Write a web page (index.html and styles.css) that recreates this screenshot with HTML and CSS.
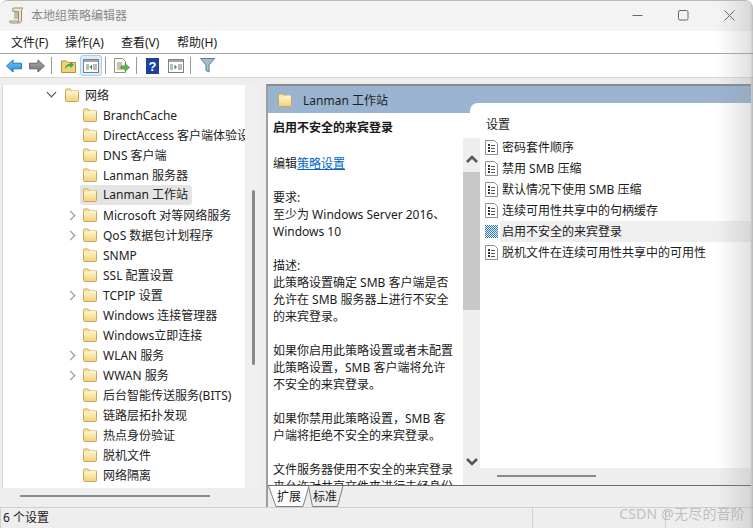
FILE: index.html
```html
<!DOCTYPE html>
<html lang="zh-CN">
<head>
<meta charset="utf-8">
<title>本地组策略编辑器</title>
<link rel="stylesheet" href="styles.css">
</head>
<body>
<svg class="defs" width="0" height="0">
  <defs>
    <linearGradient id="fg" x1="0" y1="0" x2="0" y2="1"><stop offset="0" stop-color="#fdf3c4"/><stop offset="1" stop-color="#f2d27e"/></linearGradient>
    <linearGradient id="bk" x1="0" y1="0" x2="0" y2="1"><stop offset="0" stop-color="#6cc4f5"/><stop offset="1" stop-color="#2a8fdc"/></linearGradient>
    <linearGradient id="fw" x1="0" y1="0" x2="0" y2="1"><stop offset="0" stop-color="#a8a8a8"/><stop offset="1" stop-color="#767676"/></linearGradient>
    <pattern id="dith" width="2" height="2" patternUnits="userSpaceOnUse"><rect width="2" height="2" fill="#eaf3fb"/><rect width="1" height="1" fill="#2f74b5"/><rect x="1" y="1" width="1" height="1" fill="#2f74b5"/></pattern>
    <symbol id="folder" viewBox="0 0 14 14">
      <path d="M.5 3.500V2a1 1 0 0 1 1-1h3.500l1.500 1.500h6a1 1 0 0 1 1 1v9a1 1 0 0 1-1 1h-11a1 1 0 0 1-1-1z" fill="#f8e6a8" stroke="#c9a75a"/>
      <rect x="1" y="4" width="12" height="9" fill="url(#fg)"/>
      <path d="M7 2.500h5.500v1H7z" fill="#fff"/>
    </symbol>
    <symbol id="doc" viewBox="0 0 13 15">
      <path d="M.5.500h9l3 3v11H.5z" fill="#fff" stroke="#8f8f8f"/>
      <path d="M3 4h2v2H3zM3 7h2v2H3zM3 10h2v2H3z" fill="#333"/>
      <path d="M6 5h4v1H6zM6 8h4v1H6zM6 11h4v1H6z" fill="#555"/>
    </symbol>
  </defs>
</svg>
<div class="window">
  <header class="titlebar">
    <svg class="app-icon" width="16" height="17" viewBox="0 0 16 17"><path d="M4 1h10c-1 1-1.500 2-1.500 3v9c0 2-1 3-2.500 3H2c-1 0-1.500-1-1.500-2h8c0 1 .5 1 1 1V5L3.500 4z" fill="#efe6c8" stroke="#9c8f6c"/><path d="M5 5h5M5 7h5M5 9h5M5 11h5" stroke="#8d8468"/></svg>
    <span class="title">本地组策略编辑器</span>
    <div class="controls">
      <svg width="11" height="11" viewBox="0 0 11 11"><path d="M.5 5.500h10" stroke="#666"/></svg>
      <svg width="11" height="11" viewBox="0 0 11 11"><rect x=".5" y=".5" width="9.500" height="9.500" rx="1.500" fill="none" stroke="#666"/></svg>
      <svg width="11" height="11" viewBox="0 0 11 11"><path d="M.5.500l10 10M10.500.500l-10 10" stroke="#666"/></svg>
    </div>
  </header>
  <nav class="menubar">
    <span>文件(F)</span><span>操作(A)</span><span>查看(V)</span><span>帮助(H)</span>
  </nav>
  <div class="toolbar">
    <svg class="tool t-back" width="16" height="14" viewBox="0 0 17 15"><path d="M.5 7.500L7.500 1v3.500h9v6h-9V14z" fill="url(#bk)" stroke="#1c6fb5"/></svg>
    <svg class="tool t-fwd" width="16" height="14" viewBox="0 0 17 15"><path d="M16.500 7.500L9.500 1v3.500h-9v6h9V14z" fill="url(#fw)" stroke="#5f5f5f"/></svg>
    <i class="sep"></i>
    <svg class="tool t-up" width="15" height="15" viewBox="0 0 15 15"><path d="M.5 3h5l1.500 1.500h7.500v10H.5z" fill="#f0d27a" stroke="#b08f3e"/><path d="M4 11c0-4 3-5 5-5V3.500L13 7l-4 3V8c-2 0-3.500 1-5 3z" fill="#45a845"/></svg>
    <span class="tool-sel">
      <svg width="16" height="14" viewBox="0 0 16 14"><rect x=".5" y=".5" width="15" height="13" fill="#fff" stroke="#808080"/><rect x="1" y="1" width="14" height="2" fill="#a5a5a5"/><rect x="3" y="5" width="3" height="6" fill="#bbb"/><rect x="10" y="5" width="4" height="6" fill="#bbb"/><path d="M9 5.500v5L6.500 8z" fill="#2f8f3a"/></svg>
    </span>
    <i class="sep"></i>
    <svg class="tool t-exp" width="16" height="15" viewBox="0 0 16 15"><path d="M.5.500h8l3 3v11h-11z" fill="#fffbe8" stroke="#8f8f8f"/><path d="M3 5h5M3 7h5M3 9h4M3 11h4" stroke="#888"/><path d="M7 8h4V5.500L15.500 9.500 11 13.500V11H7z" fill="#58b84a" stroke="#2f8a2f" stroke-width=".6"/></svg>
    <i class="sep"></i>
    <svg class="tool t-help" width="13" height="16" viewBox="0 0 13 16"><rect width="13" height="16" fill="#1f3f9c"/><text x="6.500" y="13" class="help-q">?</text></svg>
    <svg class="tool t-pane" width="16" height="14" viewBox="0 0 16 14"><rect x=".5" y=".5" width="15" height="13" fill="#fff" stroke="#808080"/><rect x="1" y="1" width="14" height="2" fill="#a5a5a5"/><rect x="2" y="5" width="3" height="6" fill="#bbb"/><rect x="10" y="5" width="4" height="6" fill="#bbb"/><path d="M6.500 5.500v5L9 8z" fill="#2f8f3a"/></svg>
    <i class="sep"></i>
    <svg class="tool t-filter" width="15" height="15" viewBox="0 0 15 15"><path d="M.5.500h14L9 7v7l-3-1.500V7z" fill="#9fc0d2" stroke="#5c7c90"/></svg>
  </div>
  <main class="main">
    <aside class="tree-pane">
      <div class="tree-top">
        <ul class="tree">
          <li class="node root"><span class="chev down"></span><svg class="fi"><use href="#folder"/></svg><span>网络</span></li>
          <li class="node"><span class="chev"></span><svg class="fi"><use href="#folder"/></svg><span>BranchCache</span></li>
          <li class="node"><span class="chev"></span><svg class="fi"><use href="#folder"/></svg><span>DirectAccess 客户端体验设置</span></li>
          <li class="node"><span class="chev"></span><svg class="fi"><use href="#folder"/></svg><span>DNS 客户端</span></li>
          <li class="node"><span class="chev"></span><svg class="fi"><use href="#folder"/></svg><span>Lanman 服务器</span></li>
          <li class="node"><span class="chev"></span><svg class="fi"><use href="#folder"/></svg><span class="selected">Lanman 工作站</span></li>
          <li class="node"><span class="chev right"></span><svg class="fi"><use href="#folder"/></svg><span>Microsoft 对等网络服务</span></li>
          <li class="node"><span class="chev right"></span><svg class="fi"><use href="#folder"/></svg><span>QoS 数据包计划程序</span></li>
          <li class="node"><span class="chev"></span><svg class="fi"><use href="#folder"/></svg><span>SNMP</span></li>
          <li class="node"><span class="chev"></span><svg class="fi"><use href="#folder"/></svg><span>SSL 配置设置</span></li>
          <li class="node"><span class="chev right"></span><svg class="fi"><use href="#folder"/></svg><span>TCPIP 设置</span></li>
          <li class="node"><span class="chev"></span><svg class="fi"><use href="#folder"/></svg><span>Windows 连接管理器</span></li>
          <li class="node"><span class="chev"></span><svg class="fi"><use href="#folder"/></svg><span>Windows立即连接</span></li>
          <li class="node"><span class="chev right"></span><svg class="fi"><use href="#folder"/></svg><span>WLAN 服务</span></li>
          <li class="node"><span class="chev right"></span><svg class="fi"><use href="#folder"/></svg><span>WWAN 服务</span></li>
          <li class="node"><span class="chev"></span><svg class="fi"><use href="#folder"/></svg><span>后台智能传送服务(BITS)</span></li>
          <li class="node"><span class="chev"></span><svg class="fi"><use href="#folder"/></svg><span>链路层拓扑发现</span></li>
          <li class="node"><span class="chev"></span><svg class="fi"><use href="#folder"/></svg><span>热点身份验证</span></li>
          <li class="node"><span class="chev"></span><svg class="fi"><use href="#folder"/></svg><span>脱机文件</span></li>
          <li class="node"><span class="chev"></span><svg class="fi"><use href="#folder"/></svg><span>网络隔离</span></li>
        </ul>
        <div class="vscroll"><i class="vthumb"></i></div>
      </div>
      <div class="hscroll"><i class="hthumb"></i></div>
    </aside>
    <section class="detail">
      <div class="detail-head"><svg class="fi head-fi"><use href="#folder"/></svg><span>Lanman 工作站</span></div>
      <div class="detail-body">
        <article class="desc">
          <p class="desc-title">启用不安全的来宾登录</p>
          <p>编辑<a href="#">策略设置</a></p>
          <p>要求:<br>至少为 Windows Server 2016、<br>Windows 10</p>
          <p>描述:<br>此策略设置确定 SMB 客户端是否<br>允许在 SMB 服务器上进行不安全<br>的来宾登录。</p>
          <p>如果你启用此策略设置或者未配置<br>此策略设置，SMB 客户端将允许<br>不安全的来宾登录。</p>
          <p>如果你禁用此策略设置，SMB 客<br>户端将拒绝不安全的来宾登录。</p>
          <p>文件服务器使用不安全的来宾登录<br>来允许对共享文件夹进行未经身份</p>
        </article>
        <div class="list-col">
          <div class="list-scroll">
            <div class="sb-up"><svg width="12" height="8" viewBox="0 0 12 8"><path d="M1 7l5-5 5 5" fill="none" stroke="#555" stroke-width="2.500"/></svg></div>
            <div class="sb-thumb"></div>
            <div class="sb-down"><svg width="12" height="8" viewBox="0 0 12 8"><path d="M1 1l5 5 5-5" fill="none" stroke="#555" stroke-width="2.500"/></svg></div>
          </div>
          <div class="list-wrap">
            <div class="list">
              <div class="list-head">设置</div>
              <ul class="items">
                <li><svg class="di"><use href="#doc"/></svg><span>密码套件顺序</span></li>
                <li><svg class="di"><use href="#doc"/></svg><span>禁用 SMB 压缩</span></li>
                <li><svg class="di"><use href="#doc"/></svg><span>默认情况下使用 SMB 压缩</span></li>
                <li><svg class="di"><use href="#doc"/></svg><span>连续可用性共享中的句柄缓存</span></li>
                <li class="active"><svg class="di" viewBox="0 0 13 13"><rect width="13" height="13" fill="url(#dith)"/></svg><span>启用不安全的来宾登录</span></li>
                <li><svg class="di"><use href="#doc"/></svg><span>脱机文件在连续可用性共享中的可用性</span></li>
              </ul>
            </div>
            <div class="list-hscroll"><i></i></div>
          </div>
        </div>
      </div>
      <div class="tabs">
        <span class="tab tab-a"><svg class="tab-shape" width="42" height="21" viewBox="0 0 42 21"><path d="M.5 0L8 20.500H35L41 0" fill="#fff" stroke="#808080"/></svg><b>扩展</b></span>
        <span class="tab tab-b"><svg class="tab-shape" width="36" height="21" viewBox="0 0 36 21"><path d="M.5 0L4.500 20.500H29.500L35 0" fill="#eee" stroke="#808080"/></svg><b>标准</b></span>
      </div>
    </section>
  </main>
  <footer class="statusbar">
    <span class="st-main">6 个设置</span><span class="st-mid"></span><span class="st-end"></span>
  </footer>
  <div class="edge"></div>
  <div class="mark">CSDN @无尽的音阶</div>
</div>
</body>
</html>
```
FILE: styles.css
```css
* { box-sizing: border-box; }
html, body { margin: 0; padding: 0; background: #fff; }
body { width: 753px; height: 528px; overflow: hidden; font: 12px/17px "Noto Sans", "Noto Sans CJK SC", sans-serif; color: #1a1a1a; }
ul { list-style: none; margin: 0; padding: 0; }
p { margin: 0; }
.defs { position: absolute; }
.window { position: relative; width: 753px; height: 528px; display: flex; flex-direction: column; background: #eeeeee; border-radius: 8px 8px 0 0; border-top: 1px solid #b8b8b8; overflow: hidden; }

.titlebar { height: 30px; flex: none; display: flex; align-items: center; padding: 0 18px 2px 9px; background: #f3f3f3; }
.app-icon { margin-right: 6px; }
.title { color: #8a8a8a; font-size: 12px; }
.controls { margin-left: auto; display: flex; gap: 35px; }
.controls svg { display: block; }

.menubar { height: 23px; flex: none; display: grid; grid-template-columns: 54px 56px 56px auto; align-items: center; padding-left: 11px; background: #fff; border-bottom: 1px solid #a8a8a8; }
.toolbar { height: 24px; flex: none; display: flex; align-items: center; padding-left: 6px; background: #fff; border-bottom: 1px solid #d8d8d8; }
.tool { flex: none; display: block; }
.sep { flex: none; width: 1px; height: 17px; background: #9a9a9a; }
.t-fwd { margin-left: 7px; }
.t-fwd + .sep { margin-left: 6px; margin-right: 9px; }
.t-up { margin-right: 4px; }
.tool-sel { flex: none; width: 22px; height: 21px; display: flex; align-items: center; justify-content: center; background: #dcecfb; border: 1px solid #a5d0f4; border-radius: 3px; margin-right: 3px; }
.tool-sel + .sep { margin-right: 8px; }
.t-exp { margin-right: 6px; }
.t-exp + .sep { margin-right: 9px; }
.t-help { margin-right: 9px; }
.help-q { font: bold 13px "Liberation Sans", sans-serif; fill: #fff; text-anchor: middle; }
.t-pane { margin-right: 6px; }
.t-pane + .sep { margin-right: 9px; }

.main { flex: 1; min-height: 0; display: flex; padding: 6px 2px 0 2px; }
.tree-pane { width: 256px; flex: none; display: flex; flex-direction: column; padding-top: 1px; }
.tree-top { height: 403px; flex: none; display: flex; border-left: 1px solid #d8d8d8; }
.tree { width: 242px; flex: none; background: #fff; overflow: hidden; }
.node { height: 20px; display: flex; align-items: center; padding-left: 62px; white-space: nowrap; position: relative; color: #222; }
.node:not(.root) { padding-left: 80px; }
.fi { width: 14px; height: 14px; flex: none; margin-right: 6px; }
.selected { background: #e4e4e4; border-radius: 3px; height: 20px; line-height: 20px; padding: 0 4px 0 23px; margin-left: -23px; }
.node .fi { position: relative; z-index: 1; }
.chev { position: absolute; left: 44px; top: 6px; width: 8px; height: 8px; }
.node:not(.root) .chev { left: 64px; }
.chev.down::before, .chev.right::before { content: ""; position: absolute; width: 6px; height: 6px; border-right: 1.5px solid #444; border-bottom: 1.5px solid #444; }
.chev.down::before { transform: rotate(45deg); left: 1px; top: -2px; }
.chev.right::before { transform: rotate(-45deg); border-color: #8d8d8d; left: 0; top: 1px; }
.vscroll { flex: 1; background: #f0f0f0; position: relative; }
.vthumb { position: absolute; left: 7px; top: 105px; width: 3px; height: 175px; background: #8a8a8a; border-radius: 2px; }
.hscroll { height: 17px; flex: none; position: relative; }
.hthumb { position: absolute; left: 18px; top: 7px; width: 190px; height: 2px; background: #8a8a8a; }

.detail { flex: 1; min-width: 0; margin-left: 8px; display: flex; flex-direction: column; border-left: 2px solid #9e9e9e; border-top: 2px solid #8a8a8a; min-height: 0; }
.detail-head { height: 27px; flex: none; display: flex; align-items: center; gap: 11px; padding: 1px 0 0 10px; background: #9ab3d1; color: #1f1f1f; }
.head-fi { margin: 0; }
.detail-body { height: 373px; flex: none; display: flex; background: #fff; border-bottom: 1px solid #6a6a6a; }
.desc { width: 195px; flex: none; padding: 6px 0 0 5px; overflow: hidden; color: #1a1a1a; }
.desc p { margin-bottom: 17px; white-space: nowrap; }
.desc .desc-title { font-weight: 700; margin-bottom: 19px; }
.desc a { color: #0066cc; text-decoration: underline; }
.list-col { flex: 1; min-width: 0; display: flex; }
.list-scroll { width: 17px; flex: none; margin-top: 25px; background: #eeeeee; display: flex; flex-direction: column; align-items: center; position: relative; z-index: 1; }
.sb-up { height: 34px; flex: none; padding-top: 8px; display: flex; align-items: center; justify-content: center; }
.sb-thumb { height: 138px; width: 17px; flex: none; background: #c8c8c8; }
.sb-down { margin-top: auto; height: 46px; flex: none; display: flex; align-items: center; justify-content: center; }
.list-wrap { flex: 1; min-width: 0; display: flex; flex-direction: column; }
.list { flex: 1; min-height: 0; background: #fff; margin-top: -10px; margin-left: -10px; padding-left: 10px; border-radius: 8px 0 0 0; position: relative; }
.list-head { height: 34px; padding: 13px 0 0 6px; line-height: 17px; }
.items li { height: 21px; display: flex; align-items: center; padding-left: 5px; white-space: nowrap; }
.di { width: 13px; height: 15px; flex: none; margin-right: 4px; }
.items li.active { background: linear-gradient(#efefef, #efefef) 20px 0 / 100% 100% no-repeat; }
.items li.active .di { height: 13px; }
.list-hscroll { height: 17px; flex: none; background: #eeeeee; position: relative; }
.list-hscroll i { position: absolute; left: 17px; top: 7px; width: 99px; height: 2px; background: #8a8a8a; }
.tabs { flex: 1; display: flex; background: #eeeeee; min-height: 0; }
.tab { position: relative; height: 21px; line-height: 22px; flex: none; }
.tab b { position: relative; font-weight: 400; display: block; }
.tab-shape { position: absolute; left: 0; top: 0; display: block; }
.tab-a { width: 40px; padding-left: 9px; }
.tab-b { width: 36px; padding-left: 5px; }

.statusbar { height: 21px; flex: none; display: flex; background: #eeeeee; border-top: 1px solid #d0d0d0; line-height: 20px; }
.st-main { width: 532px; flex: none; padding-left: 2px; border-left: 1px solid #d0d0d0; }
.st-mid { width: 133px; flex: none; border-left: 1px solid #d0d0d0; }
.st-end { flex: 1; border-left: 1px solid #d0d0d0; }

.edge { position: absolute; top: 0; right: 0; bottom: 0; width: 36px; background: linear-gradient(90deg, rgba(150,150,150,0), rgba(150,150,150,.28) 92%, rgba(130,130,130,.5)); pointer-events: none; }
.mark { position: absolute; right: 8px; bottom: 5px; font-size: 14px; line-height: 18px; letter-spacing: .2px; color: rgba(150,150,150,.55); white-space: nowrap; }
```
